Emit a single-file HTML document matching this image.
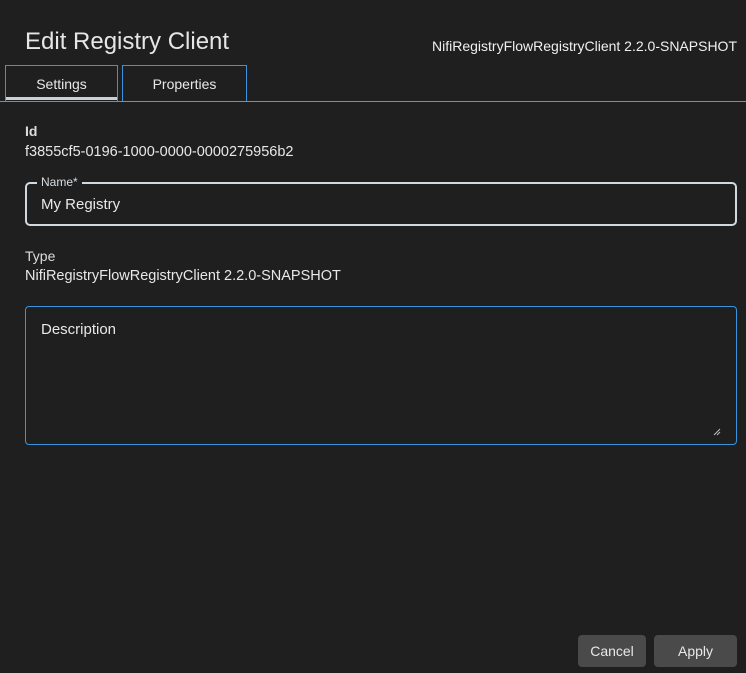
<!DOCTYPE html>
<html><head><style>
body{margin:0;width:746px;height:673px;background:#1f1f1f;font-family:"Liberation Sans",sans-serif;color:#e8e8e8;position:relative;overflow:hidden}
.a{position:absolute;white-space:nowrap}
</style></head><body>
<div class="a" style="left:25px;top:28px;font-size:24px;color:#e6e6e6">Edit Registry Client</div>
<div class="a" style="right:9px;top:38px;font-size:14px;color:#f0f0f0">NifiRegistryFlowRegistryClient 2.2.0-SNAPSHOT</div>
<div class="a" style="left:0;top:101px;width:746px;height:1px;background:#8a8a8a"></div>
<div class="a" style="left:5px;top:65px;width:111px;height:35px;border:1px solid #3a94dd;border-bottom:none;text-align:center;line-height:36px;font-size:14px">Settings</div>
<div class="a" style="left:6px;top:97px;width:111px;height:3px;background:#c8d0d8"></div>
<div class="a" style="left:122px;top:65px;width:123px;height:35px;border:1px solid #3a94dd;border-bottom:none;text-align:center;line-height:36px;font-size:14px">Properties</div>
<div class="a" style="left:25px;top:123px;font-size:14px;font-weight:bold;color:#ddd">Id</div>
<div class="a" style="left:25px;top:144px;font-size:14.5px">f3855cf5-0196-1000-0000-0000275956b2</div>
<div class="a" style="left:25px;top:182px;width:708px;height:40px;border:2px solid #d0d8e0;border-radius:5px"></div>
<div class="a" style="left:37px;top:175px;padding:0 4px;background:#1f1f1f;font-size:12px;color:#d6dde3">Name*</div>
<div class="a" style="left:41px;top:196px;font-size:15px">My Registry</div>
<div class="a" style="left:25px;top:248px;font-size:14px;color:#ddd">Type</div>
<div class="a" style="left:25px;top:268px;font-size:14.5px">NifiRegistryFlowRegistryClient 2.2.0-SNAPSHOT</div>
<div class="a" style="left:25px;top:306px;width:710px;height:137px;border:1px solid #3a94dd;border-radius:4px"></div>
<div class="a" style="left:41px;top:321px;font-size:15px">Description</div>
<svg class="a" style="left:713px;top:428px" width="8" height="8"><path d="M1 7L7 1M4 7L7 4" stroke="#bbb" stroke-width="1"/></svg>
<div class="a" style="left:578px;top:635px;width:68px;height:32px;background:#4a4a4a;border-radius:4px;text-align:center;line-height:32px;font-size:14px">Cancel</div>
<div class="a" style="left:654px;top:635px;width:83px;height:32px;background:#4a4a4a;border-radius:4px;text-align:center;line-height:32px;font-size:14px">Apply</div>
</body></html>
